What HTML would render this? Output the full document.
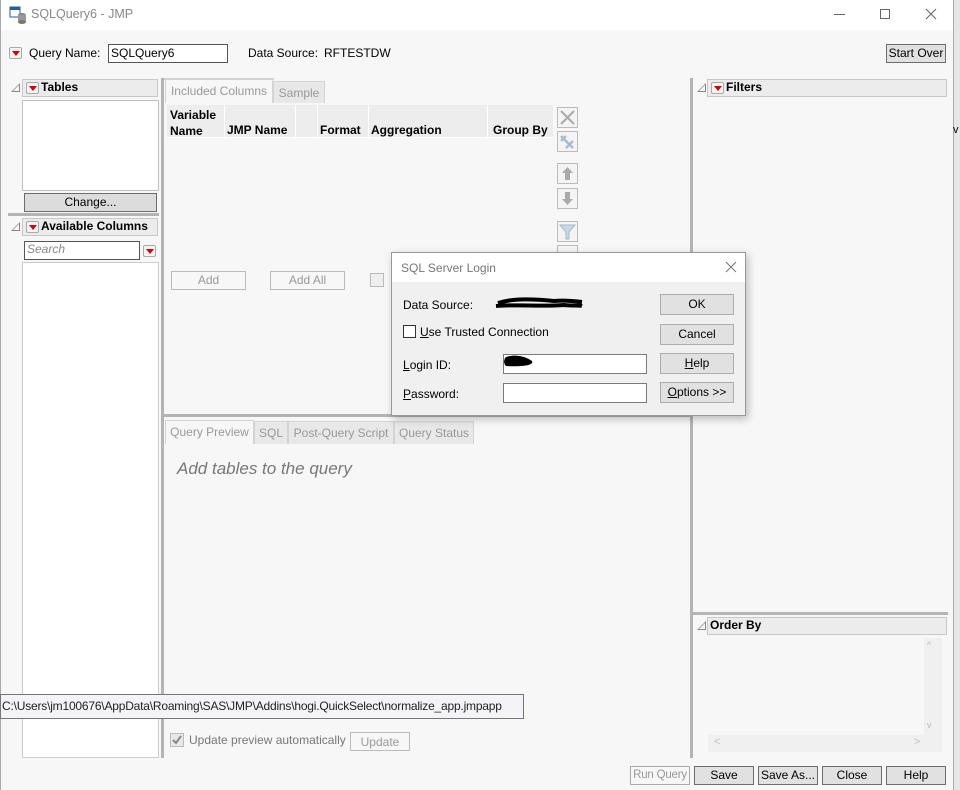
<!DOCTYPE html>
<html><head><meta charset="utf-8"><style>
*{box-sizing:border-box;margin:0;padding:0;white-space:nowrap}
body{width:960px;height:790px;position:relative;overflow:hidden;background:#f7f7f7;font-family:"Liberation Sans",sans-serif;font-size:12px;color:#000}
.a{position:absolute}
.hdr{position:absolute;background:#ececec;border:1px solid #c8c8c8;font-weight:bold;font-size:12px;line-height:15px;padding-left:18px}
.rb{position:absolute;width:13px;height:12px;border:1px solid #aaa;background:#f4f4f4;border-radius:2px}
.rb:after{content:"";position:absolute;left:2px;top:3px;border-left:4px solid transparent;border-right:4px solid transparent;border-top:5px solid #d00000}
.tri{position:absolute;width:0;height:0;border-left:9px solid transparent;border-bottom:9px solid #888}
.tri:after{content:"";position:absolute;left:-7px;top:2px;border-left:6px solid transparent;border-bottom:6px solid #f7f7f7}
.btn{position:absolute;background:#e1e1e1;border:1px solid #6d6d6d;text-align:center;font-size:12px}
.dbtn{position:absolute;background:#e1e1e1;border:1px solid #adadad;text-align:center;font-size:12px;line-height:18px}
.gbtn{position:absolute;border:1px solid #bbb;color:#999;text-align:center;font-size:12px;line-height:16px}
.tab{position:absolute;color:#999;font-size:12px;line-height:22px;text-align:center;background:#e8e8e8;border:1px solid #d4d4d4;border-bottom:none}
.white{position:absolute;background:#fff;border:1px solid #c0c0c0}
.ic{position:absolute;width:21px;height:21px;border:1px solid #bbb;background:#f4f4f4}
u{text-decoration:underline}
</style></head><body>
<div class="a" style="left:0;top:0;width:954px;height:30px;background:#fff"></div>
<div class="a" style="left:954px;top:0;width:6px;height:790px;background:#e6e6e6"></div>
<div class="a" style="left:953px;top:0;width:1px;height:790px;background:#aaa"></div>
<div class="a" style="left:0;top:0;width:1px;height:790px;background:#aaa"></div>
<svg class="a" style="left:9px;top:6px" width="18" height="18"><rect x="1" y="1" width="10" height="10" fill="#fff" stroke="#2a5aa0"/><rect x="1" y="1" width="10" height="3" fill="#2a5aa0"/><ellipse cx="13" cy="9" rx="4" ry="2" fill="#888"/><rect x="9" y="9" width="8" height="7" fill="#999"/><ellipse cx="13" cy="16" rx="4" ry="2" fill="#777"/></svg>
<div class="a" style="left:31px;top:7px;font-size:12.5px;color:#888">SQLQuery6 - JMP</div>
<div class="a" style="left:834px;top:14px;width:11px;height:1px;background:#666"></div>
<div class="a" style="left:880px;top:9px;width:10px;height:10px;border:1px solid #666"></div>
<svg class="a" style="left:925px;top:8px" width="12" height="12"><path d="M1 1L11 11M11 1L1 11" stroke="#666" stroke-width="1"/></svg>

<div class="rb" style="left:9px;top:47px"></div>
<div class="a" style="left:29px;top:46px">Query Name:</div>
<div class="a" style="left:108px;top:44px;width:120px;height:19px;background:#fff;border:1px solid #555;padding-left:2px;line-height:16px">SQLQuery6</div>
<div class="a" style="left:248px;top:46px">Data Source:</div>
<div class="a" style="left:324px;top:46px">RFTESTDW</div>
<div class="btn" style="left:886px;top:44px;width:60px;height:19px;line-height:17px">Start Over</div>

<div class="tri" style="left:11px;top:83px"></div>
<div class="hdr" style="left:22px;top:79px;width:136px;height:18px">Tables</div>
<div class="rb" style="left:26px;top:82px"></div>
<div class="white" style="left:22px;top:100px;width:137px;height:91px"></div>
<div class="btn" style="left:24px;top:193px;width:133px;height:19px;background:#dcdcdc;line-height:17px">Change...</div>
<div class="a" style="left:8px;top:213px;width:151px;height:3px;background:#b4b4b4"></div>
<div class="tri" style="left:11px;top:222px"></div>
<div class="hdr" style="left:22px;top:218px;width:136px;height:18px">Available Columns</div>
<div class="rb" style="left:26px;top:221px"></div>
<div class="a" style="left:24px;top:241px;width:116px;height:19px;background:#fff;border:1px solid #555;font-style:italic;color:#888;padding-left:2px;line-height:15px">Search</div>
<div class="rb" style="left:143px;top:245px"></div>
<div class="white" style="left:22px;top:262px;width:137px;height:496px;border-color:#ccc"></div>
<div class="a" style="left:161px;top:78px;width:3px;height:680px;background:#b4b4b4"></div>

<div class="a" style="left:164px;top:78px;width:110px;height:2px;background:#d0d0d0"></div>
<div class="tab" style="left:165px;top:79px;width:108px;height:24px;background:#f7f7f7">Included Columns</div>
<div class="tab" style="left:273px;top:81px;width:52px;height:22px">Sample</div>
<div class="a" style="left:167px;top:105px;width:386px;height:32px;background:#ededed"></div>
<div class="a" style="left:224px;top:105px;width:1px;height:32px;background:#fff"></div>
<div class="a" style="left:295px;top:105px;width:1px;height:32px;background:#fff"></div>
<div class="a" style="left:317px;top:105px;width:1px;height:32px;background:#fff"></div>
<div class="a" style="left:368px;top:105px;width:1px;height:32px;background:#fff"></div>
<div class="a" style="left:487px;top:105px;width:1px;height:32px;background:#fff"></div>
<div class="a" style="left:167px;top:137px;width:386px;height:1px;background:#fff"></div>
<div class="a" style="left:170px;top:107px;font-weight:bold;line-height:16px">Variable<br>Name</div>
<div class="a" style="left:227px;top:123px;font-weight:bold">JMP Name</div>
<div class="a" style="left:320px;top:123px;font-weight:bold">Format</div>
<div class="a" style="left:371px;top:123px;font-weight:bold">Aggregation</div>
<div class="a" style="left:493px;top:123px;font-weight:bold">Group By</div>
<div class="ic" style="left:557px;top:107px"><svg width="19" height="19"><path d="M3 3L16 16M16 3L3 16" stroke="#aaa" stroke-width="2"/></svg></div>
<div class="ic" style="left:557px;top:131px"><svg width="19" height="19"><path d="M3 4L8 9M8 4L3 9M8 9L15 16M15 9L8 16" stroke="#a9bccf" stroke-width="2.5"/></svg></div>
<div class="ic" style="left:557px;top:163px"><svg width="19" height="19"><path d="M9.5 3L15 9H12V16H7V9H4Z" fill="#aaa"/></svg></div>
<div class="ic" style="left:557px;top:188px"><svg width="19" height="19"><path d="M9.5 16L15 10H12V3H7V10H4Z" fill="#aaa"/></svg></div>
<div class="ic" style="left:557px;top:221px"><svg width="19" height="19"><path d="M2 3H17L11 10V17H8V10Z" fill="#c8d8e6" stroke="#a8b8c8"/></svg></div>
<div class="ic" style="left:557px;top:245px;height:8px"></div>
<div class="gbtn" style="left:171px;top:271px;width:75px;height:19px">Add</div>
<div class="gbtn" style="left:270px;top:271px;width:75px;height:19px">Add All</div>
<div class="a" style="left:370px;top:273px;width:14px;height:14px;border:1px solid #bbb;background:#eee"></div>
<div class="a" style="left:164px;top:414px;width:527px;height:3px;background:#b4b4b4"></div>

<div class="tab" style="left:165px;top:420px;width:89px;height:24px;background:#f7f7f7">Query Preview</div>
<div class="tab" style="left:254px;top:421px;width:34px;height:23px">SQL</div>
<div class="tab" style="left:288px;top:421px;width:106px;height:23px">Post-Query Script</div>
<div class="tab" style="left:394px;top:421px;width:80px;height:23px">Query Status</div>
<div class="a" style="left:177px;top:459px;font-size:17px;font-style:italic;color:#777">Add tables to the query</div>
<div class="a" style="left:170px;top:733px;width:14px;height:14px;border:1px solid #bbb;background:#e8e8e8"><svg width="12" height="12"><path d="M2 6L5 9L10 2" stroke="#888" stroke-width="2" fill="none"/></svg></div>
<div class="a" style="left:189px;top:733px;color:#777">Update preview automatically</div>
<div class="gbtn" style="left:350px;top:732px;width:60px;height:19px;line-height:18px">Update</div>
<div class="a" style="left:690px;top:78px;width:3px;height:680px;background:#b4b4b4"></div>

<div class="tri" style="left:697px;top:83px"></div>
<div class="hdr" style="left:707px;top:79px;width:240px;height:18px">Filters</div>
<div class="rb" style="left:711px;top:82px"></div>
<div class="a" style="left:953px;top:124px;font-size:11px">v</div>
<div class="a" style="left:693px;top:612px;width:255px;height:3px;background:#b4b4b4"></div>
<div class="tri" style="left:697px;top:621px"></div>
<div class="hdr" style="left:707px;top:617px;width:240px;height:18px;padding-left:2px">Order By</div>
<div class="a" style="left:924px;top:638px;width:18px;height:97px;background:#f0f0f0"></div>
<div class="a" style="left:708px;top:735px;width:234px;height:17px;background:#f0f0f0"></div>
<div class="a" style="left:927px;top:640px;color:#bbb;font-size:9px">^</div>
<div class="a" style="left:927px;top:720px;color:#bbb;font-size:9px">v</div>
<div class="a" style="left:714px;top:736px;color:#bbb;font-size:11px">&lt;</div>
<div class="a" style="left:914px;top:736px;color:#bbb;font-size:11px">&gt;</div>

<div class="a" style="left:0;top:694px;width:524px;height:25px;background:#f3f3f8;border:1px solid #767676;font-size:12px;line-height:23px;padding-left:1px;color:#222;letter-spacing:-0.2px;overflow:hidden">C:\Users\jm100676\AppData\Roaming\SAS\JMP\Addins\hogi.QuickSelect\normalize_app.jmpapp</div>

<div class="gbtn" style="left:630px;top:766px;width:60px;height:19px;line-height:17px;border-color:#aaa;font-size:11.5px;letter-spacing:-0.2px">Run Query</div>
<div class="btn" style="left:694px;top:766px;width:60px;height:19px;line-height:17px">Save</div>
<div class="btn" style="left:758px;top:766px;width:60px;height:19px;line-height:17px">Save As...</div>
<div class="btn" style="left:822px;top:766px;width:60px;height:19px;line-height:17px">Close</div>
<div class="btn" style="left:886px;top:766px;width:60px;height:19px;line-height:17px">Help</div>

<div class="a" style="left:391px;top:252px;width:355px;height:164px;background:#f0f0f0;border:1px solid #999;box-shadow:2px 3px 8px rgba(0,0,0,0.25)">
<div class="a" style="left:0;top:0;width:353px;height:29px;background:#fff"></div>
<div class="a" style="left:9px;top:8px;color:#777;font-size:12px">SQL Server Login</div>
<svg class="a" style="left:333px;top:8px" width="12" height="12"><path d="M1 1L11 11M11 1L1 11" stroke="#777"/></svg>
<div class="a" style="left:11px;top:45px">Data Source:</div>
<svg class="a" style="left:102px;top:42px" width="90" height="16"><path d="M4 8C20 3 40 4 60 6C70 5 80 6 88 7M2 11C25 9 45 12 70 10C78 11 85 10 88 11" stroke="#000" stroke-width="4" fill="none"/></svg>
<div class="dbtn" style="left:268px;top:41px;width:74px;height:21px">OK</div>
<div class="a" style="left:11px;top:72px;width:13px;height:13px;border:1px solid #333;background:#fff"></div>
<div class="a" style="left:28px;top:72px"><u>U</u>se Trusted Connection</div>
<div class="dbtn" style="left:268px;top:71px;width:74px;height:21px">Cancel</div>
<div class="a" style="left:11px;top:105px"><u>L</u>ogin ID:</div>
<div class="a" style="left:111px;top:101px;width:144px;height:20px;background:#fff;border:1px solid #7a7a7a"></div>
<svg class="a" style="left:108px;top:98px" width="40" height="22"><path d="M6 6C15 3 25 5 32 10C34 14 25 16 6 15C3 12 4 8 6 6Z" fill="#000"/></svg>
<div class="dbtn" style="left:268px;top:100px;width:74px;height:21px"><u>H</u>elp</div>
<div class="a" style="left:11px;top:134px"><u>P</u>assword:</div>
<div class="a" style="left:111px;top:130px;width:144px;height:20px;background:#fff;border:1px solid #7a7a7a"></div>
<div class="dbtn" style="left:268px;top:129px;width:74px;height:21px"><u>O</u>ptions &gt;&gt;</div>
</div>
</body></html>
